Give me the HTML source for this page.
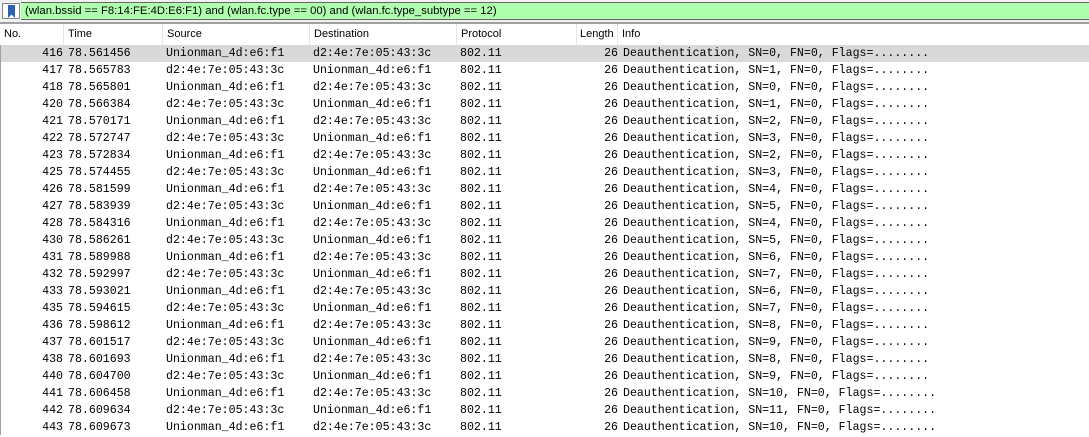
<!DOCTYPE html>
<html><head><style>
body{margin:0;width:1089px;height:430px;overflow:hidden;background:#fff;position:relative;font-family:"Liberation Sans",sans-serif}
#fb{position:absolute;left:0;top:0;width:1089px;height:22px;background:#f0f0f0}
#ic{position:absolute;left:2px;top:3px;width:18px;height:16px;background:#fff;border:1px solid #888;box-sizing:border-box}
#bm{position:absolute;left:5px;top:1px}
#gr{position:absolute;left:21px;top:2px;width:1068px;height:18px;background:#afffaf;border-top:1px solid #666;border-bottom:1px solid #666;box-sizing:border-box;font-size:11.3px;line-height:16px;padding-left:4px;color:#000}
#sep{position:absolute;left:0;top:22px;width:1089px;height:2px;background:#a0a0a0}
#hd{position:absolute;left:0;top:24px;width:1089px;height:21px;font-size:11px;line-height:21px}
.h{position:absolute;top:0;height:21px;border-right:1px solid #e5e5e5;padding-left:4px;box-sizing:border-box}
#rows{position:absolute;left:0;top:45px;width:1089px;font-family:"Liberation Mono",monospace;font-size:11.6px;border-left:1px solid #a0a0a0;height:390px}
.r{position:relative;height:17px;line-height:18px;white-space:pre}
.r.s{background:#d9d9d9}
.r span{position:absolute;top:0}
</style></head><body>
<div id="fb"><div id="ic"><svg id="bm" width="7" height="13" viewBox="0 0 7 13"><path d="M0 0H7V13L3.5 9.5L0 13Z" fill="#2a62b0"/></svg></div>
<div id="gr">(wlan.bssid == F8:14:FE:4D:E6:F1) and (wlan.fc.type == 00) and (wlan.fc.type_subtype == 12)</div></div>
<div id="sep"></div>
<div id="hd">
<div class="h" style="left:0;width:64px">No.</div>
<div class="h" style="left:64px;width:99px">Time</div>
<div class="h" style="left:163px;width:147px">Source</div>
<div class="h" style="left:310px;width:147px">Destination</div>
<div class="h" style="left:457px;width:120px">Protocol</div>
<div class="h" style="left:577px;width:41px;padding-left:3px">Length</div>
<div class="h" style="left:618px;width:471px;border:none">Info</div>
</div>
<div id="rows"></div>
<script>
const d=[[416,"561456",0,0],[417,"565783",1,1],[418,"565801",0,0],[420,"566384",1,1],[421,"570171",0,2],[422,"572747",1,3],[423,"572834",0,2],[425,"574455",1,3],[426,"581599",0,4],[427,"583939",1,5],[428,"584316",0,4],[430,"586261",1,5],[431,"589988",0,6],[432,"592997",1,7],[433,"593021",0,6],[435,"594615",1,7],[436,"598612",0,8],[437,"601517",1,9],[438,"601693",0,8],[440,"604700",1,9],[441,"606458",0,10],[442,"609634",1,11],[443,"609673",0,10]];
const U="Unionman_4d:e6:f1",D="d2:4e:7e:05:43:3c";let h="";
d.forEach((r,i)=>{const s=r[2]?D:U,t=r[2]?U:D;
h+=`<div class="r${i==0?' s':''}"><span style="right:1027px">${r[0]}</span><span style="left:67px">78.${r[1]}</span><span style="left:165px">${s}</span><span style="left:312px">${t}</span><span style="left:459px">802.11</span><span style="right:472px">26</span><span style="left:622px">Deauthentication, SN=${r[3]}, FN=0, Flags=........</span></div>`});
document.getElementById('rows').innerHTML=h;
</script>
</body></html>
